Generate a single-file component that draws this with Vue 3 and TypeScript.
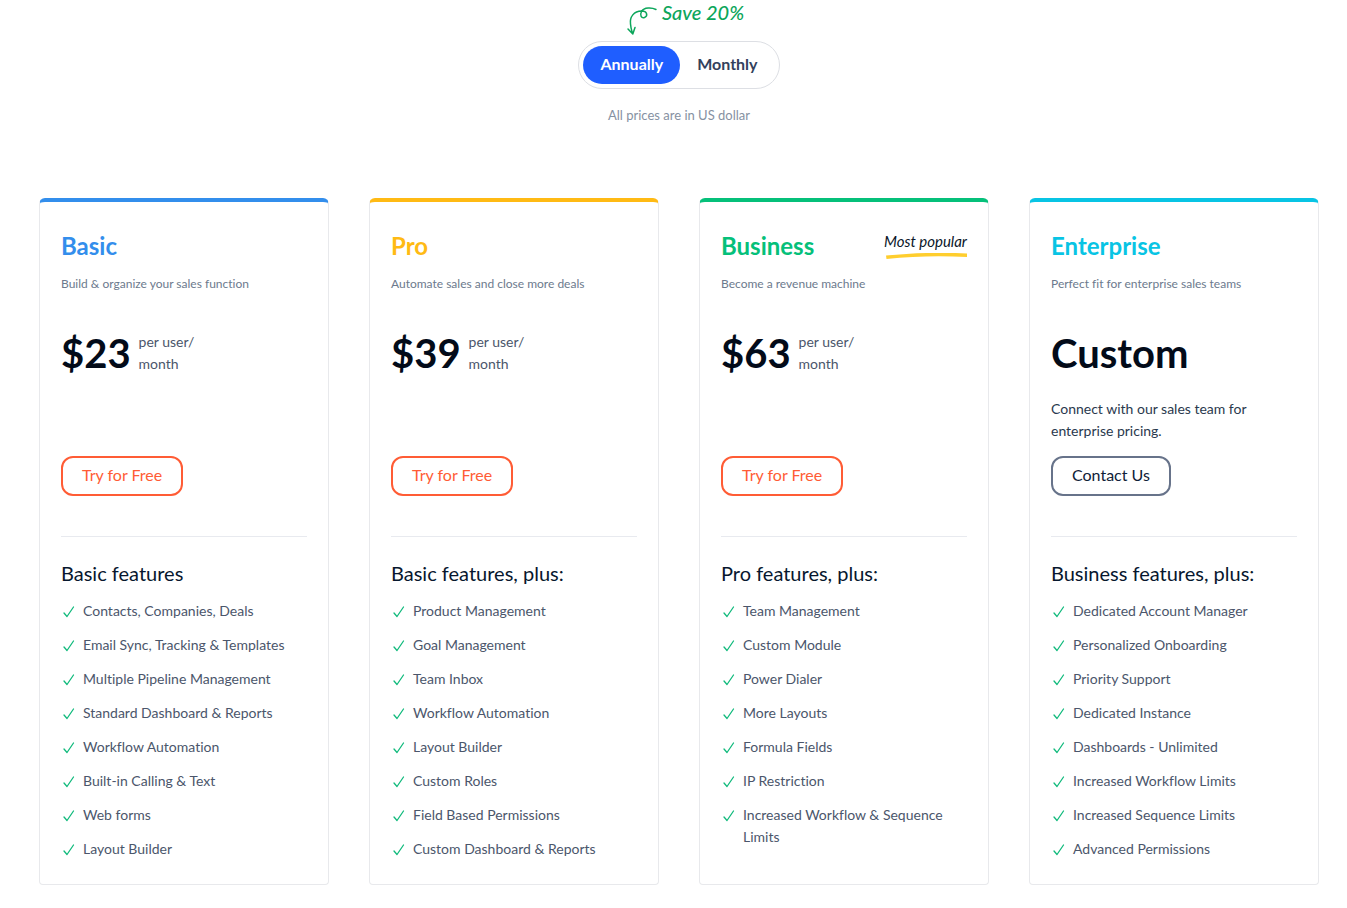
<script setup lang="ts">
import { ref } from 'vue'

type Billing = 'Annually' | 'Monthly'

interface Plan {
  id: string
  name: string
  tagline: string
  price: string
  unit?: string[]
  note?: string
  badge?: string
  cta: string
  heading: string
  features: string[]
}

const periods: Billing[] = ['Annually', 'Monthly']
const billing = ref<Billing>('Annually')

const unit = ['per user/', 'month']

const plans: Plan[] = [
  {
    id: 'basic',
    name: 'Basic',
    tagline: 'Build & organize your sales function',
    price: '$23',
    unit,
    cta: 'Try for Free',
    heading: 'Basic features',
    features: [
      'Contacts, Companies, Deals',
      'Email Sync, Tracking & Templates',
      'Multiple Pipeline Management',
      'Standard Dashboard & Reports',
      'Workflow Automation',
      'Built-in Calling & Text',
      'Web forms',
      'Layout Builder',
    ],
  },
  {
    id: 'pro',
    name: 'Pro',
    tagline: 'Automate sales and close more deals',
    price: '$39',
    unit,
    cta: 'Try for Free',
    heading: 'Basic features, plus:',
    features: [
      'Product Management',
      'Goal Management',
      'Team Inbox',
      'Workflow Automation',
      'Layout Builder',
      'Custom Roles',
      'Field Based Permissions',
      'Custom Dashboard & Reports',
    ],
  },
  {
    id: 'business',
    name: 'Business',
    tagline: 'Become a revenue machine',
    price: '$63',
    unit,
    badge: 'Most popular',
    cta: 'Try for Free',
    heading: 'Pro features, plus:',
    features: [
      'Team Management',
      'Custom Module',
      'Power Dialer',
      'More Layouts',
      'Formula Fields',
      'IP Restriction',
      'Increased Workflow & Sequence Limits',
    ],
  },
  {
    id: 'enterprise',
    name: 'Enterprise',
    tagline: 'Perfect fit for enterprise sales teams',
    price: 'Custom',
    note: 'Connect with our sales team for enterprise pricing.',
    cta: 'Contact Us',
    heading: 'Business features, plus:',
    features: [
      'Dedicated Account Manager',
      'Personalized Onboarding',
      'Priority Support',
      'Dedicated Instance',
      'Dashboards - Unlimited',
      'Increased Workflow Limits',
      'Increased Sequence Limits',
      'Advanced Permissions',
    ],
  },
]
</script>

<template>
  <main class="page">
    <header class="billing">
      <p class="save">
        <svg class="save-arrow" width="32" height="30" viewBox="0 0 32 30" aria-hidden="true">
          <path d="M30 3.500C26 1.500 18 1 15.500 5.500C13.500 9.500 15.500 12.500 18.500 11.500C22 10 21.500 5 15.500 5C8 5 3.500 11 4.500 18C4.800 22 5.500 24 6.500 27.500M2 23L6.800 28L9 21.500" />
        </svg>
        <span>Save 20%</span>
      </p>
      <div class="toggle" role="group" aria-label="Billing period">
        <button
          v-for="period in periods"
          :key="period"
          type="button"
          class="toggle-option"
          :class="{ active: billing === period }"
          :aria-pressed="billing === period"
          @click="billing = period"
        >{{ period }}</button>
      </div>
      <p class="currency">All prices are in US dollar</p>
    </header>

    <section class="plans" aria-label="Pricing plans">
      <article v-for="plan in plans" :key="plan.id" class="card" :class="plan.id">
        <div class="title-row">
          <h2 class="name">{{ plan.name }}</h2>
          <div v-if="plan.badge" class="badge">
            <span>{{ plan.badge }}</span>
            <svg width="81" height="6" viewBox="0 0 81 6" aria-hidden="true">
              <path d="M0 2.500C27 0 55 -1 81 0.500V4C55 2.500 28 3 0.500 6Z" />
            </svg>
          </div>
        </div>
        <p class="tagline">{{ plan.tagline }}</p>
        <div class="price-row">
          <strong class="price">{{ plan.price }}</strong>
          <span v-if="plan.unit" class="unit">
            <span v-for="line in plan.unit" :key="line">{{ line }}</span>
          </span>
        </div>
        <p class="note">{{ plan.note }}</p>
        <a href="#" class="cta" @click.prevent>{{ plan.cta }}</a>
        <hr class="rule" />
        <h3 class="heading">{{ plan.heading }}</h3>
        <ul class="features">
          <li v-for="feature in plan.features" :key="feature">
            <svg class="check" width="14" height="22" viewBox="0 0 14 22" aria-hidden="true">
              <path d="M3 13L6 16.500L12.500 7" />
            </svg>
            <span>{{ feature }}</span>
          </li>
        </ul>
      </article>
    </section>
  </main>
</template>

<style>
body {
  margin: 0;
  background: #fff;
}
</style>

<style scoped>
.page {
  box-sizing: border-box;
  padding: 0 28px 23px 39px;
  font-family: Lato, "Liberation Sans", sans-serif;
  font-size: 14px;
  line-height: 22px;
  font-weight: 400;
  font-variant-ligatures: none;
  color: #4b566b;
}

p,
h2,
h3,
ul {
  margin: 0;
  padding: 0;
}

.billing {
  display: flex;
  flex-direction: column;
  align-items: center;
}

.save {
  display: flex;
  gap: 4px;
  height: 41px;
  padding-left: 12px;
  box-sizing: border-box;
  font-size: 20px;
  line-height: 24px;
  font-weight: 500;
  font-style: italic;
  color: #0ca65b;
}

.save-arrow {
  margin-top: 6px;
  fill: none;
  stroke: #0ca65b;
  stroke-width: 1.5;
  stroke-linecap: round;
  stroke-linejoin: round;
}

.toggle {
  display: flex;
  padding: 4px;
  border: 1px solid #dddfe4;
  border-radius: 24px;
}

.toggle-option {
  height: 38px;
  padding: 0 17px 2px;
  border: 0;
  border-radius: 19px;
  background: none;
  font: inherit;
  font-size: 16px;
  font-weight: 700;
  color: #33415c;
  cursor: pointer;
}

.toggle-option.active {
  background: #1f5eff;
  color: #fff;
}

.currency {
  margin-top: 15px;
  font-size: 13px;
  color: #8691a2;
}

.plans {
  display: grid;
  grid-template-columns: repeat(4, minmax(0, 1fr));
  gap: 40px;
  margin-top: 72px;
}

.card {
  padding: 28px 21px 12px;
  border: 1px solid #e8e9ec;
  border-top: 4px solid var(--accent);
  border-radius: 6px 6px 4px 4px;
}

.basic {
  --accent: #338eec;
}

.pro {
  --accent: #ffba14;
}

.business {
  --accent: #05c07a;
}

.enterprise {
  --accent: #08c4e4;
}

.title-row {
  display: flex;
  justify-content: space-between;
}

.name {
  font-size: 24px;
  line-height: 32px;
  font-weight: 700;
  color: var(--accent);
}

.badge {
  display: flex;
  flex-direction: column;
  align-items: flex-end;
  font-size: 15px;
  line-height: 23px;
  font-style: italic;
  color: #0a1628;
}

.badge svg {
  fill: #ffce2e;
}

.tagline {
  margin-top: 12px;
  font-size: 12px;
  line-height: 20px;
  color: #6c7a8d;
}

.price-row {
  display: flex;
  gap: 8px;
  height: 44px;
  margin-top: 37px;
}

.price {
  font-size: 40px;
  line-height: 44px;
  font-weight: 700;
  color: #030b19;
}

.unit {
  display: flex;
  flex-direction: column;
}

.note {
  min-height: 44px;
  margin: 23px 0 14px;
  color: #2a394e;
}

.cta {
  display: inline-block;
  padding: 6px 19px 8px;
  border: 2px solid #ff5c35;
  border-radius: 12px;
  font-size: 16px;
  color: #ff5c35;
  text-decoration: none;
}

.enterprise .cta {
  border-color: #67738a;
  color: #0f2138;
}

.rule {
  margin: 40px 0 22px;
  border: 0;
  border-top: 1px solid #e8eaef;
}

.heading {
  font-size: 20px;
  line-height: 28px;
  font-weight: 400;
  color: #07172e;
}

.features {
  margin-top: 13px;
  list-style: none;
}

.features li {
  display: flex;
  gap: 8px;
  margin-bottom: 12px;
}

.check {
  flex: none;
  fill: none;
  stroke: #10ba7c;
  stroke-width: 1.3;
  stroke-linecap: round;
  stroke-linejoin: round;
}
</style>
